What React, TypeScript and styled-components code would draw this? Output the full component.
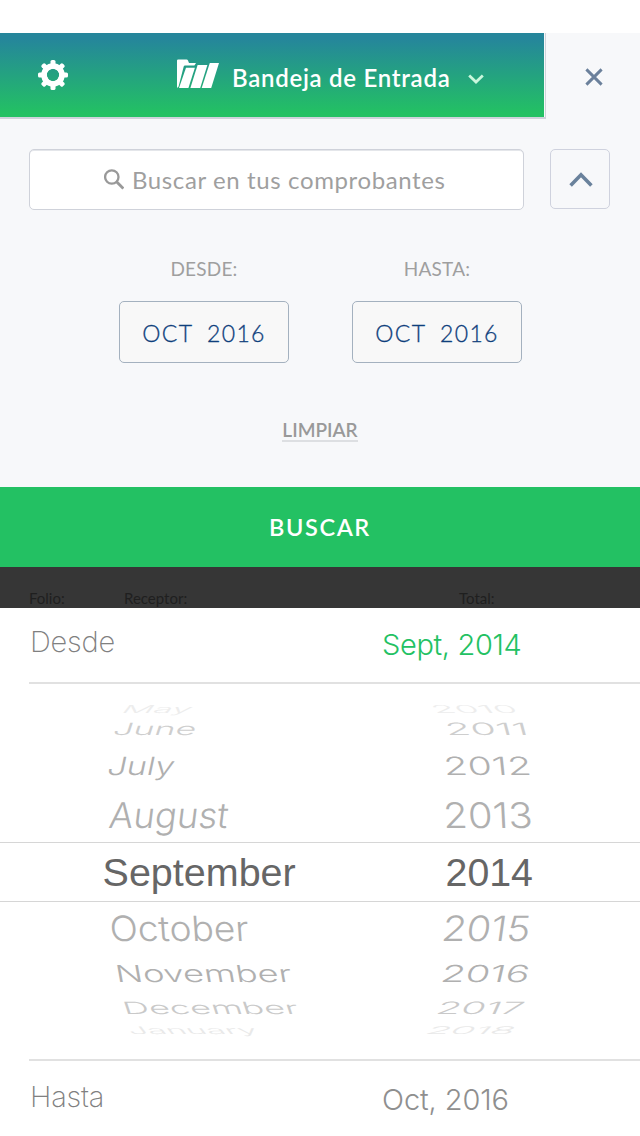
import React, { useLayoutEffect, useRef, useState } from 'react';
import styled, { createGlobalStyle } from 'styled-components';

const brand = '"Lato", "Liberation Sans", sans-serif';
const light = '"Inter", "Liberation Sans", sans-serif';

const GlobalStyle = createGlobalStyle`
  * { box-sizing: border-box; }
  body { margin: 0; background: #fff; }
  button { font: inherit; border: 0; background: none; padding: 0; margin: 0; color: inherit; }
`;

const Screen = styled.div`
  width: 640px;
  height: 1136px;
  padding-top: 33px;
  overflow: hidden;
  display: flex;
  flex-direction: column;
  background: #fff;
  font-family: ${brand};
`;

const TopBar = styled.header`
  display: flex;
  height: 86px;
  flex: none;
  background: #f7f8fa;
`;

const Banner = styled.div`
  width: 546px;
  display: flex;
  align-items: center;
  border-right: 1px solid #d0d4da;
  border-bottom: 2px solid #ced3db;
  padding: 0 1px 0 38px;
  background: linear-gradient(#25869b 0%, #25869b 7%, #23c163 96%, #23c163 100%) 0 0 / 544px 100% no-repeat;
`;

const MailboxButton = styled.button`
  display: flex;
  align-items: center;
  margin-left: 109px;
  color: #fff;
`;

const FolderGlyph = styled.svg`
  margin-bottom: 3px;
`;

const MailboxTitle = styled.span`
  margin: 6px 18px 0 13px;
  font-size: 24px;
  line-height: 30px;
  font-weight: 600;
  letter-spacing: 0.72px;
  white-space: nowrap;
`;

const ChevronGlyph = styled.svg`
  margin-top: 3px;
`;

const CloseButton = styled.button`
  flex: 1;
  display: flex;
  align-items: center;
  justify-content: center;
  padding: 1px 0 0 1px;
`;

const Filters = styled.section`
  height: 368px;
  flex: none;
  display: flex;
  flex-direction: column;
  align-items: center;
  padding-top: 30px;
  background: #f7f8fa;
`;

const SearchRow = styled.div`
  align-self: stretch;
  display: flex;
  gap: 26px;
  padding: 0 30px 0 29px;
`;

const SearchField = styled.div`
  width: 495px;
  height: 61px;
  display: flex;
  align-items: center;
  padding-left: 74px;
  gap: 8px;
  border: 1px solid #cfd2da;
  border-radius: 5px;
  box-shadow: inset 0 1px 0 #e4e6ea;
  background: #fff;
`;

const Placeholder = styled.span`
  font-size: 24px;
  line-height: 30px;
  letter-spacing: 0.61px;
  color: #9f9f9f;
  white-space: nowrap;
`;

const CollapseButton = styled.button`
  width: 60px;
  height: 60px;
  display: flex;
  align-items: center;
  justify-content: center;
  && { border: 1px solid #cfd2de; padding-left: 1px; }
  border-radius: 5px;
`;

const DateRow = styled.div`
  display: flex;
  gap: 63px;
  margin-top: 47px;
`;

const DateField = styled.label`
  width: 170px;
  display: flex;
  flex-direction: column;
  align-items: center;
`;

const DateLabel = styled.span`
  height: 44px;
  padding-left: 1px;
  font-size: 19px;
  line-height: 23px;
  letter-spacing: 0.2px;
  color: #9f9f9f;
`;

const DateValue = styled.span`
  width: 170px;
  height: 62px;
  padding-left: 1px;
  border: 1px solid #a4b1bf;
  border-radius: 5px;
  background: #f8f8f8;
  color: #0f3f7c;
  font-size: 23px;
  font-weight: 300;
  line-height: 62px;
  letter-spacing: 1.3px;
  word-spacing: 7px;
  text-align: center;
  white-space: nowrap;
  -webkit-text-stroke: 0.3px #0f3f7c;
`;

const ClearButton = styled.button`
  && {
    margin-top: 55px;
    height: 24px;
    border-bottom: 2px solid #dddfe2;
  }
  font-size: 19px;
  line-height: 24px;
  font-weight: 600;
  color: #999;
`;

const SubmitButton = styled.button`
  && {
    height: 80px;
    flex: none;
    background: #23c163;
    color: #fff;
    font-size: 23.5px;
    line-height: 80px;
    font-weight: 600;
    letter-spacing: 1.6px;
  }
`;

const DimmedHeader = styled.div`
  height: 41px;
  flex: none;
  display: grid;
  grid-template-columns: 95px 335px 1fr;
  padding: 21px 0 0 29px;
  background: #363636;
  color: #1f1f1f;
  font-size: 15px;
  line-height: 20px;
`;

const Sheet = styled.section`
  flex: 1;
  display: flex;
  flex-direction: column;
  background: #fff;
  font-family: ${light};
  font-weight: 300;
`;

const RangeRow = styled.div<{ $active?: boolean }>`
  display: grid;
  grid-template-columns: 352px 1fr;
  margin-left: 29px;
  padding-left: 1px;
  padding-top: ${p => (p.$active ? '0' : '2px')};
  height: 76px;
  flex: none;
  font-size: 29px;
  line-height: 36px;
  border-bottom: ${p => (p.$active ? '2px solid #e1e1e1' : '0')};
`;

const RangeName = styled.span`
  padding-top: 16px;
  font-weight: 200;
  letter-spacing: -0.2px;
  color: #808080;
`;

const RangeValue = styled.span<{ $active?: boolean }>`
  padding-top: 19px;
  letter-spacing: ${p => (p.$active ? '-0.35px' : '-0.1px')};
  color: ${p => (p.$active ? '#23c163' : '#8f8f8f')};
`;

const Wheel = styled.div`
  position: relative;
  height: 375px;
  flex: none;
  padding-top: 17px;
`;

const WheelEdge = styled.div`
  margin-left: 29px;
  height: 2px;
  flex: none;
  background: #e1e1e1;
`;

const SelectionBand = styled.div`
  position: absolute;
  left: 0;
  right: 0;
  top: 158px;
  height: 60px;
  border: solid #d6d6d6;
  border-width: 1px 0;
`;

const WheelRow = styled.div<{ $height: number; $tone: string; $selected?: boolean }>`
  display: flex;
  align-items: flex-end;
  height: ${p => p.$height}px;
  color: ${p => p.$tone};
  font-size: 40px;
  line-height: 40px;
  font-family: ${p => (p.$selected ? '"Liberation Sans", sans-serif' : light)};
  font-weight: ${p => (p.$selected ? 400 : 300)};
`;

const WheelCell = styled.div<{ $inset: number; $span: number }>`
  width: ${p => p.$span}px;
  padding-left: ${p => p.$inset}px;
`;

const WheelText = styled.span`
  display: inline-block;
  vertical-align: bottom;
  white-space: pre;
  transform-origin: 0 34.5px;
`;

type CellProps = { text: string; left: number; right: number; origin: number; span: number; cap: number; lean: number };

/* A label curved away on the drum: squeezed to its cap height, slanted, and stretched to its width. */
function DrumCell({ text, left, right, origin, span, cap, lean }: CellProps) {
  const ref = useRef<HTMLSpanElement>(null);
  const [natural, setNatural] = useState(0);
  useLayoutEffect(() => {
    const measure = () => ref.current && setNatural(ref.current.offsetWidth);
    measure();
    document.fonts.ready.then(measure);
  }, []);
  const slant = Math.tan((Math.abs(lean) * Math.PI) / 180) * cap;
  const sx = natural ? (right - left - slant) / (natural - 5) : 1;
  const shift = (lean < 0 ? slant : 0) - 2.5 * sx;
  return (
    <WheelCell $inset={left - origin} $span={span}>
      <WheelText
        ref={ref}
        style={{ transform: `translateX(${shift}px) skewX(${-lean}deg) scale(${sx}, ${cap / 29.1})` }}
      >
        {text}
      </WheelText>
    </WheelCell>
  );
}

type DrumRow = {
  height: number; cap: number; tone: string;
  month: [string, number, number, number];
  year: [string, number, number, number];
};

const rows: DrumRow[] = [
  { height: 18, cap: 8, tone: '#ededed', month: ['May', 121.5, 193, 38], year: ['2010', 430.5, 517, -38] },
  { height: 22.3, cap: 12.3, tone: '#cecece', month: ['June', 114.3, 196.8, 18], year: ['2011', 446, 527.5, -15] },
  { height: 39.7, cap: 18.3, tone: '#b0b0b0', month: ['July', 107.5, 174, 12], year: ['2012', 445, 530.5, -6] },
  { height: 53, cap: 25.7, tone: '#b0b0b0', month: ['August', 109.5, 227.5, 7], year: ['2013', 445, 530.5, -3] },
  { height: 58, cap: 28.6, tone: '#666', month: ['September', 104.8, 293.4, 0], year: ['2014', 447.7, 530.2, 0] },
  { height: 55.3, cap: 25.3, tone: '#b0b0b0', month: ['October', 111.3, 247.7, -4], year: ['2015', 443, 530, 8] },
  { height: 41, cap: 17, tone: '#b0b0b0', month: ['November', 115.5, 290.5, -10], year: ['2016', 441.5, 528.5, 13] },
  { height: 31.4, cap: 12.3, tone: '#c9c9c9', month: ['December', 123, 297.5, -18], year: ['2017', 436.5, 523.3, 24] },
  { height: 20.3, cap: 7.6, tone: '#e9e9e9', month: ['January', 127, 257.5, -38], year: ['2018', 425.5, 515.5, 45] },
];

const GearIcon = () => (
  <svg width="30" height="30" viewBox="-15 -15 30 30" aria-hidden="true">
    {[0, 45, 90, 135].map(a => (
      <rect key={a} x="-2.5" y="-15" width="5" height="30" rx="1.6" fill="#fff" transform={`rotate(${a})`} mask="url(#hub)" />
    ))}
    <mask id="hub" maskUnits="userSpaceOnUse" x="-16" y="-16" width="32" height="32">
      <rect x="-16" y="-16" width="32" height="32" fill="#fff" />
      <circle r="6.2" fill="#000" />
    </mask>
    <circle r="9" fill="none" stroke="#fff" strokeWidth="5.6" />
  </svg>
);

const FolderIcon = () => (
  <FolderGlyph width="42" height="30" viewBox="0 0 42 30" fill="#fff" aria-hidden="true">
    <path d="M0 1.6Q0 .4 1.2.4H9.6Q10.6.4 11 1.4L12 4H19L17.4 6.5H8Q7 6.5 6.7 7.6L1.6 27.5L0 29Z" />
    <path d="M9 8.7H17.9L11.4 29H2Z" />
    <path d="M20.6 6H30.4L23.2 29H13.4Z" />
    <path d="M32.8 4H42L34.2 29H24.7Z" />
  </FolderGlyph>
);

const App = () => (
  <>
    <GlobalStyle />
    <Screen>
      <TopBar>
        <Banner>
          <GearIcon />
          <MailboxButton>
            <FolderIcon />
            <MailboxTitle>Bandeja de Entrada</MailboxTitle>
            <ChevronGlyph width="16" height="16" viewBox="0 0 16 16" fill="none" stroke="#c9f7dd" strokeWidth="2.8" aria-hidden="true">
              <path d="M1.2 6.6L8 13L14.8 6.6" />
            </ChevronGlyph>
          </MailboxButton>
        </Banner>
        <CloseButton aria-label="Cerrar">
          <svg width="18" height="18" viewBox="0 0 18 18" fill="none" stroke="#6b809b" strokeWidth="2.9" aria-hidden="true">
            <path d="M1.4 1.4L16.6 16.6M16.6 1.4L1.4 16.6" />
          </svg>
        </CloseButton>
      </TopBar>
      <Filters>
        <SearchRow>
          <SearchField>
            <svg width="20" height="21" viewBox="0 0 20 21" fill="none" stroke="#999" strokeWidth="2.3" aria-hidden="true">
              <circle cx="7.8" cy="8" r="6.7" />
              <path d="M12.6 12.8L19.3 19.6" strokeWidth="2.8" />
            </svg>
            <Placeholder>Buscar en tus comprobantes</Placeholder>
          </SearchField>
          <CollapseButton aria-label="Ocultar filtros">
            <svg width="24" height="16" viewBox="0 0 24 16" fill="none" stroke="#6a829c" strokeWidth="3.6" aria-hidden="true">
              <path d="M1.6 14.4L12 3.8L22.4 14.4" />
            </svg>
          </CollapseButton>
        </SearchRow>
        <DateRow>
          <DateField>
            <DateLabel>DESDE:</DateLabel>
            <DateValue>OCT 2016</DateValue>
          </DateField>
          <DateField>
            <DateLabel>HASTA:</DateLabel>
            <DateValue>OCT 2016</DateValue>
          </DateField>
        </DateRow>
        <ClearButton>LIMPIAR</ClearButton>
      </Filters>
      <SubmitButton>BUSCAR</SubmitButton>
      <DimmedHeader>
        <span>Folio:</span>
        <span>Receptor:</span>
        <span>Total:</span>
      </DimmedHeader>
      <Sheet>
        <RangeRow $active>
          <RangeName>Desde</RangeName>
          <RangeValue $active>Sept, 2014</RangeValue>
        </RangeRow>
        <Wheel>
          <SelectionBand />
          {rows.map(r => (
            <WheelRow key={r.month[0]} $height={r.height} $tone={r.tone} $selected={r.month[0] === 'September'}>
              <DrumCell text={r.month[0]} left={r.month[1]} right={r.month[2]} lean={r.month[3]} origin={0} span={400} cap={r.cap} />
              <DrumCell text={r.year[0]} left={r.year[1]} right={r.year[2]} lean={r.year[3]} origin={400} span={240} cap={r.cap} />
            </WheelRow>
          ))}
        </Wheel>
        <WheelEdge />
        <RangeRow>
          <RangeName>Hasta</RangeName>
          <RangeValue>Oct, 2016</RangeValue>
        </RangeRow>
      </Sheet>
    </Screen>
  </>
);

export default App;
